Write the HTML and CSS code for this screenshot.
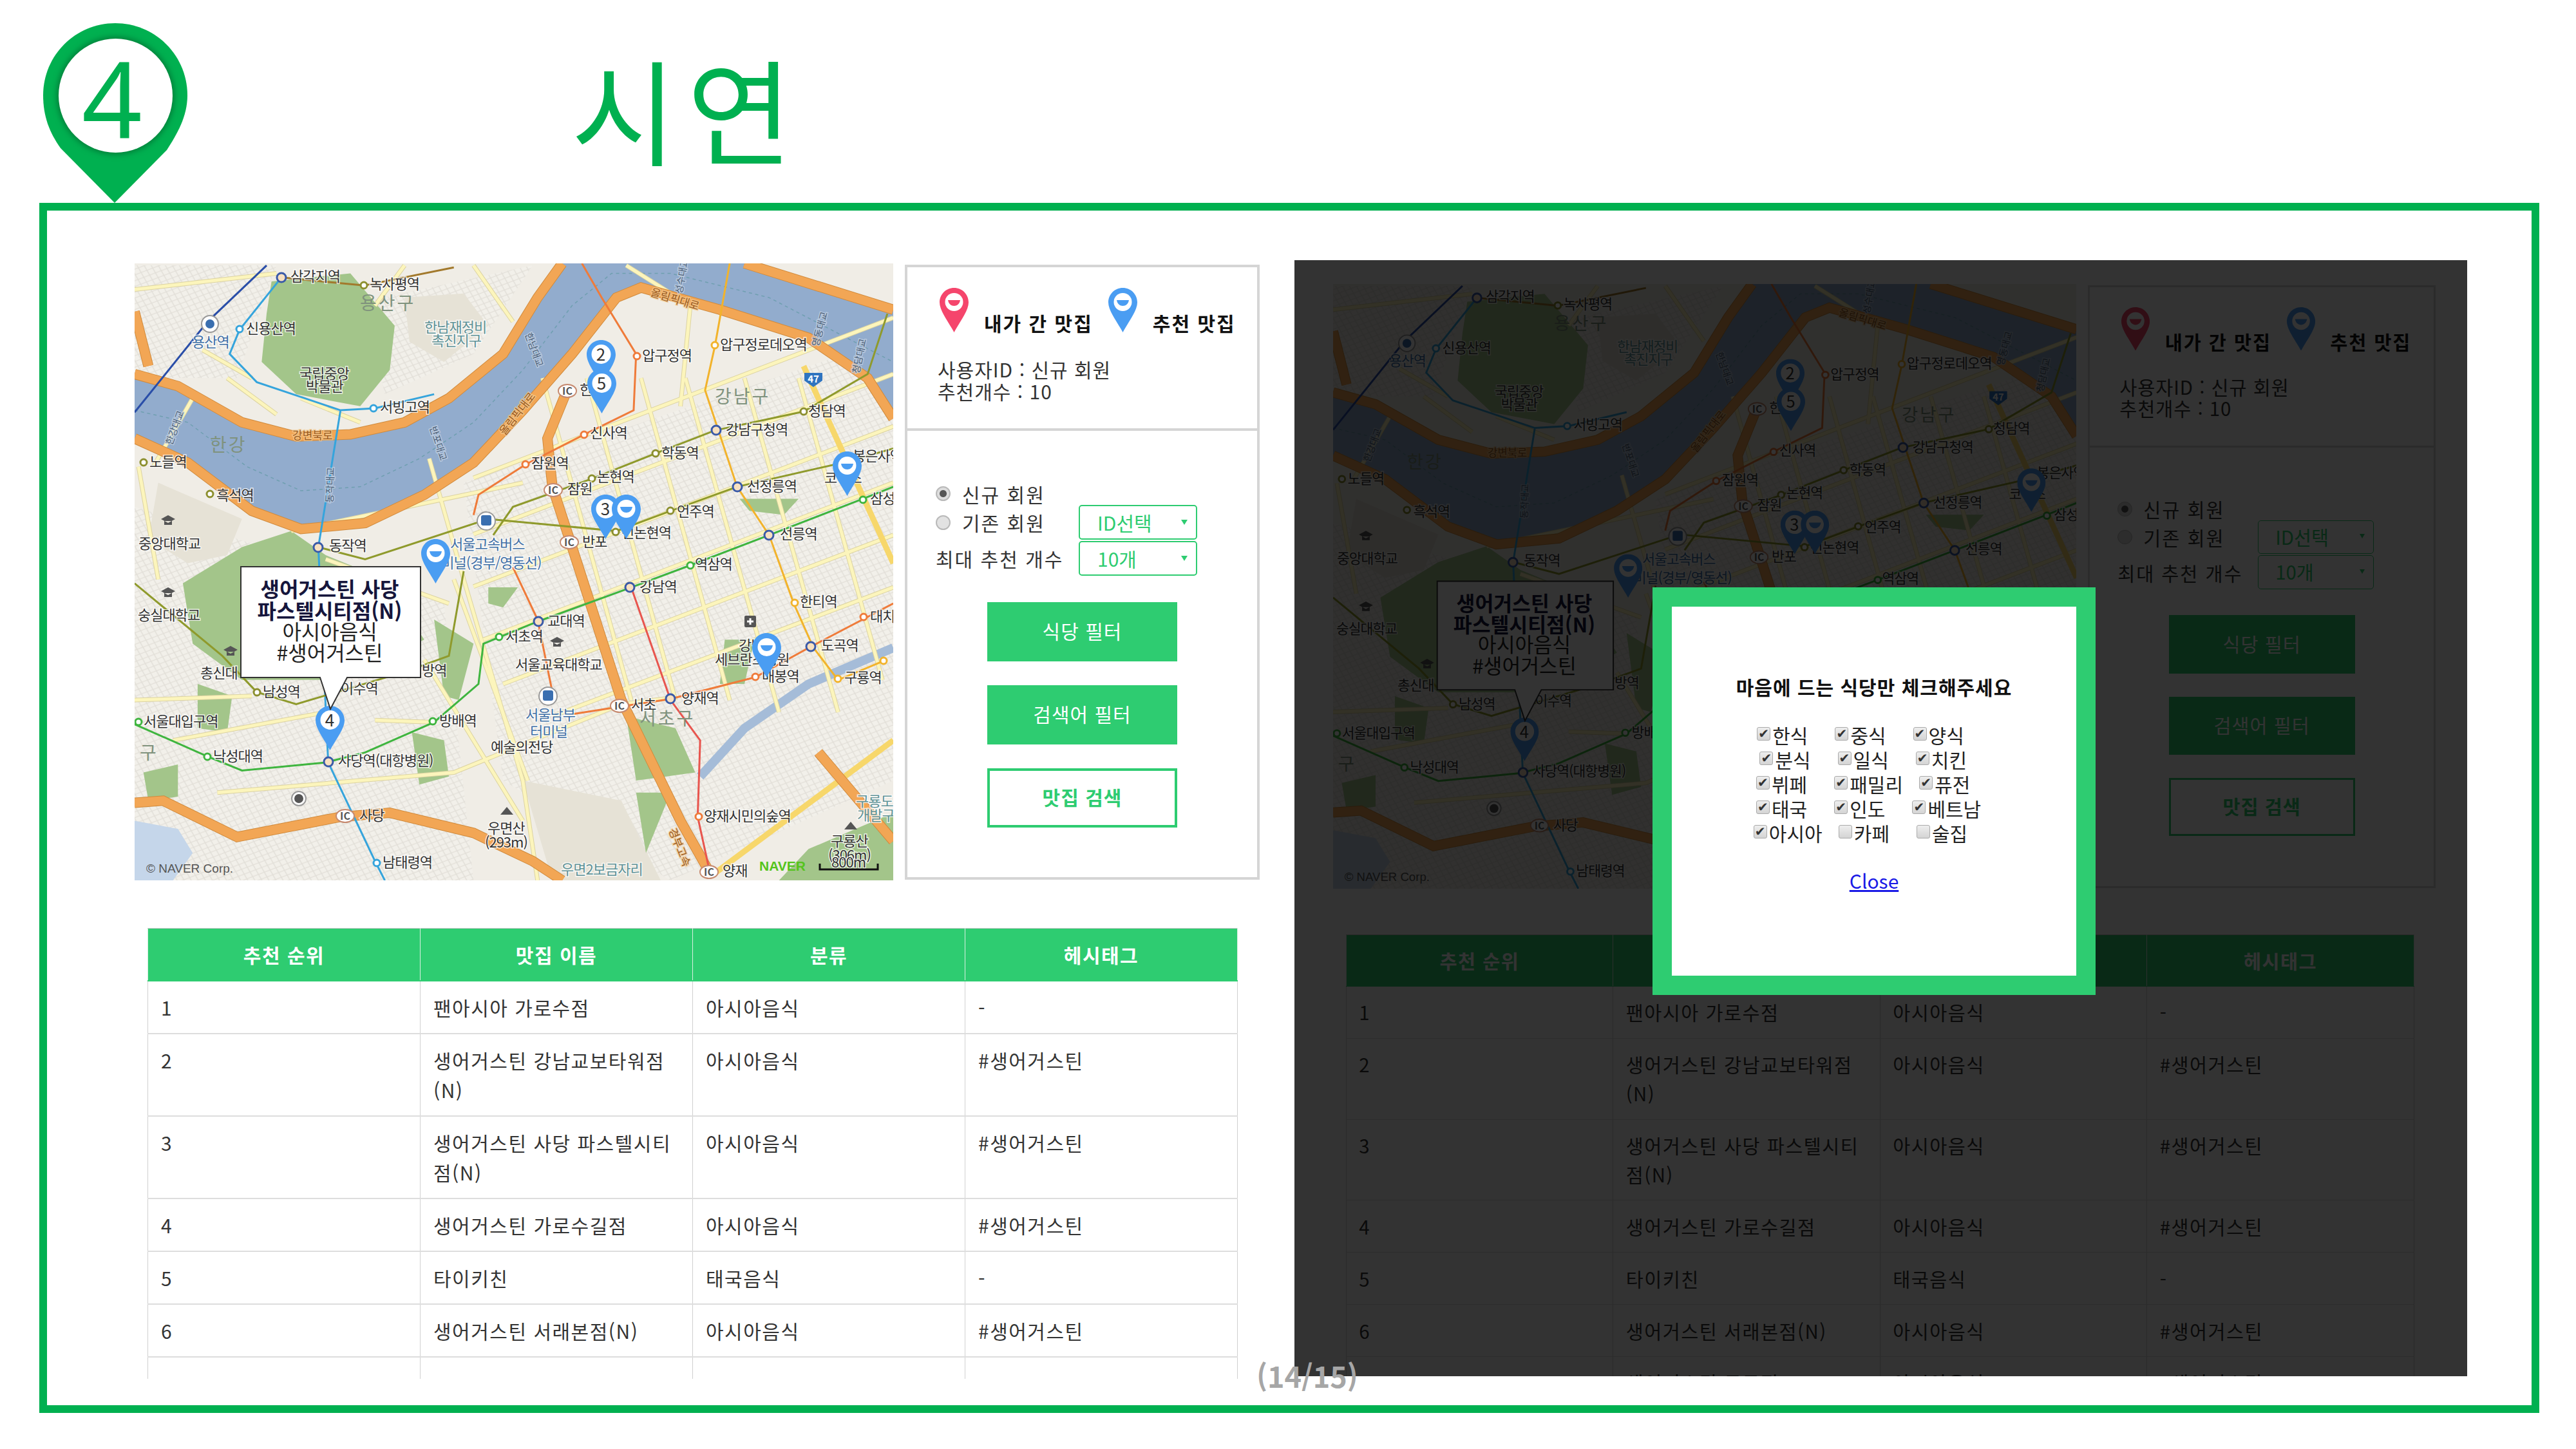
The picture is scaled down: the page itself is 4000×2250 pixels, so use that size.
FILE: index.html
```html
<!DOCTYPE html>
<html lang="ko">
<head>
<meta charset="utf-8">
<title>시연</title>
<link rel="stylesheet" href="styles.css">
</head>
<body>
<svg class="defs" aria-hidden="true">
  <defs>
    <symbol id="pin-v" viewBox="0 0 45 69">
      <path d="M22.5 0C35 0 45 10 45 22.5C45 36 31 53 22.5 69C14 53 0 36 0 22.5C0 10 10 0 22.5 0Z" fill="currentColor"/>
      <circle cx="22.5" cy="22" r="14" fill="#fff"/>
      <path d="M13 19H32C31 25 27 28 22.5 28C18 28 14 25 13 19Z" fill="currentColor"/>
    </symbol>
    <symbol id="pin-n" viewBox="0 0 45 69">
      <path d="M22.5 0C35 0 45 10 45 22.5C45 36 31 53 22.5 69C14 53 0 36 0 22.5C0 10 10 0 22.5 0Z" fill="currentColor"/>
      <circle cx="22.5" cy="22" r="15" fill="#fff"/>
    </symbol>
    <pattern id="streets" width="26" height="26" patternUnits="userSpaceOnUse" patternTransform="rotate(-25)">
      <rect width="26" height="26" fill="#f2f0ea"/>
      <path d="M0 6H26M0 19H26M7 0V26M20 0V26" stroke="#e2dfd8" stroke-width="2" fill="none"/>
    </pattern>
    <g id="expressways" class="nss">
      <path d="M12 290L100 320L230 410L340 445L450 440L560 410L650 350L760 240L830 100L880 15"/>
      <path d="M1250 15L1552 130"/>
      <path d="M12 450L120 510L250 630L350 675L480 660L600 590L700 510L800 380L900 240L990 100L1040 75L1200 130L1380 200L1500 300L1552 400"/>
      <path d="M890 330L850 450L860 570L900 720L1000 1100L1120 1400L1180 1530"/>
      <path d="M12 1355L70 1350L220 1440L430 1390L530 1380L700 1430L820 1500L880 1548"/>
      <path d="M1400 1230L1552 1450"/>
      <path d="M12 135L40 270"/>
    </g>
    <g id="roads" class="nss">
      <path d="M700 548L1552 150M700 688L1552 290M700 818L1552 420M720 950L1552 560M760 1060L1552 690M860 1140L1552 820"/>
      <path d="M840 300L1020 1100M930 300L1110 1100M1040 300L1220 1100M1130 300L1320 1130M1250 300L1440 1130M1360 300L1530 1050"/>
      <path d="M610 500L680 800L800 1300L830 1548M20 520L60 800M130 350L50 520M500 1150L620 1155M12 1100L250 1090M200 300L300 390"/>
      <path d="M180 1330L660 1280L1000 1110L1100 1095M12 80L300 40M700 20L780 160M1140 120L1120 370M330 680L800 560M400 750L650 860M600 1000L800 1400"/>
      <path d="M350 350L470 410M560 20L500 120M150 230L250 300M1010 20L1140 120M90 1200L400 1130M660 800L810 1300"/>
    </g>
  </defs>
</svg>

<header class="slide-head">
  <svg class="step-pin" viewBox="0 0 224 279">
    <path class="step-pin-body" d="M112 0C174 0 224 50 224 112C224 145 208 172 192 197L111 279L27 194C10 170 0 145 0 112C0 50 50 0 112 0Z"/>
    <circle class="step-pin-shade" cx="112.500" cy="112.500" r="91"/>
    <circle class="step-pin-hole" cx="112.500" cy="112.500" r="88.500"/>
    <text class="step-pin-num" x="107" y="179" text-anchor="middle">4</text>
  </svg>
  <h1 class="slide-title">시연</h1>
</header>

<main class="frame">
  <section class="shot">
    <div class="shot-top">
      <svg class="map" viewBox="0 0 1178 958">
        <g id="seoul-map">
          <rect class="m-land" width="1178" height="958"/>
          <g transform="translate(-9.2 -9.4) scale(.765 .625)">
            <path class="m-block" d="M680 560L1552 200V1300L1100 1548L760 1300Z"/>
            <path class="m-block" d="M12 620L640 860L700 1548H12Z"/>
            <path class="m-block" d="M12 20H300L220 300L12 300Z"/>
            <path class="m-block" d="M480 110L820 20L700 240L520 340Z"/>
            <path class="m-hill" d="M60 560L230 650L200 740L120 760L40 700Z"/>
            <path class="m-hill" d="M560 100L680 90L730 170L640 260L570 210Z"/>
            <path class="m-hill" d="M800 1300L1000 1350L1080 1548H860Z"/>
            <path class="m-park" d="M290 60L450 40L540 170L530 280L470 370L340 340L270 260L280 140Z"/>
            <path class="m-park" d="M110 810L230 720L330 680L400 740L520 800L600 950L420 1050L230 1050L130 960Z"/>
            <path class="m-park" d="M620 900L700 960L670 1100L640 1090ZM575 1180L640 1200L650 1290L590 1310ZM1010 1140L1110 1170L1150 1280L1030 1300ZM1240 600L1360 600L1330 640L1260 630ZM1210 950L1270 950L1250 1060L1200 1060ZM730 820L790 820L760 870L730 860ZM140 1060L210 1090L200 1180L140 1170ZM30 1280L100 1260L100 1340L40 1350ZM1030 1330L1100 1330L1050 1480ZM1380 1470L1552 1380V1548H1320Z"/>
            <path class="m-river" d="M12 290L100 320L230 410L340 445L450 440L560 410L650 350L760 240L830 100L880 15H1250L1552 130V400L1500 300L1380 200L1200 130L1040 75L990 100L900 240L800 380L700 510L600 590L480 660L350 675L250 630L120 510L12 450Z"/>
            <path class="m-river-dash nss-self" d="M12 380L120 410L240 520L350 580L470 570L590 500L700 410L800 280L900 120L980 40L1100 40L1300 100L1552 260"/>
            <path class="m-stream nss-self" d="M1160 1290L1250 1170L1380 1060L1552 970"/>
            <path class="m-lake" d="M12 1400L100 1420L130 1480L90 1548H12Z"/>
            <g class="m-casing-y"><use href="#roads"/></g>
            <g class="m-fill-y"><use href="#roads"/></g>
            <path class="m-bright nss-self" d="M1370 270L1552 760M1190 1530L1552 1200"/>
            <g class="m-casing-o"><use href="#expressways"/></g>
            <g class="m-fill-o"><use href="#expressways"/></g>
            <g class="m-lines">
              <path class="ln-green" d="M12 1160L160 1240L230 1275L400 1255L480 1230L620 1155L710 1060L720 960L830 905L1020 820L1140 765L1300 690L1490 600L1552 570"/>
              <path class="ln-orange" d="M700 640L710 590L805 515L925 440L1025 380L1030 240L960 100L920 15"/>
              <path class="ln-orange" d="M780 770L830 900L860 1080M900 1135L1100 1097L1272 1043L1385 967L1552 860"/>
              <path class="ln-gold" d="M1220 15L1190 220L1170 330L1235 570L1300 690L1350 860L1390 970L1440 1050L1532 1003"/>
              <path class="ln-red" d="M1020 820L1100 1100L1160 1200L1155 1390L1180 1530"/>
              <path class="ln-blue" d="M430 380L385 720L405 1255L500 1500L520 1548M310 50L225 180L205 240L260 310L430 380L500 375L620 340M225 180"/>
              <path class="ln-navy" d="M12 385L160 160L280 20"/>
              <path class="ln-olive" d="M385 720L480 750L730 650L990 680L1100 630L1235 570L1450 510L1552 475"/>
              <path class="ln-olive" d="M740 690L780 620L940 550L1070 487L1190 430L1370 383L1500 290L1540 140"/>
              <path class="ln-olive" d="M12 810L190 990L260 1080L340 1110L560 1030L650 990L680 780"/>
              <path class="ln-brown" d="M310 50L478 70L660 25"/>
            </g>
          </g>

          <g class="st st-multi"><circle cx="228" cy="22" r="7"/><circle cx="285" cy="441" r="7"/><circle cx="301" cy="774" r="7"/><circle cx="627" cy="556" r="7"/><circle cx="769" cy="503" r="7"/><circle cx="985" cy="422" r="7"/><circle cx="936" cy="347" r="7"/><circle cx="903" cy="259" r="7"/><circle cx="1050" cy="595" r="7"/><circle cx="832" cy="676" r="7"/></g>
          <g class="st st-olive"><circle cx="14" cy="309" r="5"/><circle cx="117" cy="358" r="5"/><circle cx="190" cy="666" r="5"/><circle cx="710" cy="334" r="5"/><circle cx="809" cy="295" r="5"/><circle cx="1039" cy="230" r="5"/><circle cx="832" cy="384" r="5"/><circle cx="747" cy="417" r="5"/><circle cx="356" cy="34" r="5"/></g>
          <g class="st st-green"><circle cx="6" cy="712" r="5"/><circle cx="113" cy="766" r="5"/><circle cx="463" cy="711" r="5"/><circle cx="566" cy="580" r="5"/><circle cx="863" cy="469" r="5"/><circle cx="1131" cy="367" r="5"/></g>
          <g class="st st-orange"><circle cx="607" cy="312" r="5"/><circle cx="698" cy="266" r="5"/><circle cx="780" cy="144" r="5"/><circle cx="964" cy="642" r="5"/><circle cx="876" cy="859" r="5"/><circle cx="1132" cy="549" r="5"/></g>
          <g class="st st-gold"><circle cx="901" cy="127" r="5"/><circle cx="1025" cy="527" r="5"/><circle cx="1092" cy="645" r="5"/><circle cx="1163" cy="617" r="5"/></g>
          <g class="st st-cyan"><circle cx="163" cy="102" r="5"/><circle cx="371" cy="225" r="5"/><circle cx="376" cy="931" r="5"/></g>

          <g class="m-icons">
            <g transform="translate(52 397)"><path class="ic-dark" d="M-11 0L0-6L11 0L0 6ZM-6 3V9H6V3Z"/></g>
            <g transform="translate(52 509)"><path class="ic-dark" d="M-11 0L0-6L11 0L0 6ZM-6 3V9H6V3Z"/></g>
            <g transform="translate(149 600)"><path class="ic-dark" d="M-11 0L0-6L11 0L0 6ZM-6 3V9H6V3Z"/></g>
            <g transform="translate(656 586)"><path class="ic-dark" d="M-11 0L0-6L11 0L0 6ZM-6 3V9H6V3Z"/></g>
            <path class="ic-dark" d="M578 844L588 856H568Z"/>
            <path class="ic-dark" d="M1112 867L1122 879H1102Z"/>
            <g transform="translate(546 400)"><circle class="ic-ring" r="14"/><rect class="ic-blue" x="-8" y="-9" width="16" height="16" rx="3"/></g>
            <g transform="translate(642 672)"><circle class="ic-ring" r="14"/><rect class="ic-blue" x="-8" y="-9" width="16" height="16" rx="3"/></g>
            <g transform="translate(117 94)"><circle class="ic-ring" r="13"/><circle class="ic-blue" r="7"/></g>
            <g transform="translate(255 831)"><circle class="ic-ring" r="11"/><circle class="ic-dark" r="7"/></g>
            <g transform="translate(956 556)"><rect class="ic-dark" x="-9" y="-9" width="18" height="18" rx="2"/><path class="ic-cross" d="M-5-1.500H5V1.500H-5ZM-1.500-5H1.500V5H-1.500Z"/></g>
          </g>

          <g class="mt">
            <text x="242" y="28">삼각지역</text><text x="365" y="40">녹사평역</text>
            <text x="173" y="109">신용산역</text>
            <text x="256" y="179">국립중앙</text><text x="266" y="199">박물관</text>
            <text x="381" y="231">서빙고역</text><text x="23" y="316">노들역</text><text x="127" y="368">흑석역</text>
            <text x="6" y="443">중앙대학교</text><text x="302" y="446">동작역</text><text x="5" y="554">숭실대학교</text>
            <text x="102" y="644">총신대</text><text x="199" y="673">남성역</text><text x="320" y="668">이수역</text><text x="446" y="640">방역</text>
            <text x="14" y="719">서울대입구역</text><text x="122" y="773">낙성대역</text><text x="316" y="780">사당역(대항병원)</text>
            <text x="473" y="718">방배역</text><text x="576" y="587">서초역</text><text x="641" y="563">교대역</text><text x="591" y="631">서울교육대학교</text>
            <text x="553" y="759">예술의전당</text><text x="548" y="885">우면산</text><text x="544" y="907">(293m)</text>
            <text x="349" y="865">사당</text><text x="385" y="938">남태령역</text><text x="913" y="951">양재</text>
            <text x="1081" y="905">구룡산</text><text x="1077" y="927">(306m)</text><text x="1082" y="938">800m</text>
            <text x="884" y="866">양재시민의숲역</text><text x="849" y="683">양재역</text><text x="771" y="693">서초</text>
            <text x="974" y="649">매봉역</text><text x="1102" y="651">구룡역</text><text x="1066" y="601">도곡역</text><text x="1142" y="556">대치</text>
            <text x="901" y="623">세브란스병원</text><text x="938" y="601">강남</text><text x="1033" y="533">한티역</text><text x="870" y="475">역삼역</text>
            <text x="784" y="510">강남역</text><text x="1002" y="428">선릉역</text><text x="951" y="354">선정릉역</text><text x="842" y="393">언주역</text>
            <text x="756" y="426">신논현역</text><text x="695" y="440">반포</text><text x="672" y="358">잠원</text><text x="718" y="339">논현역</text>
            <text x="616" y="318">잠원역</text><text x="707" y="271">신사역</text><text x="818" y="302">학동역</text><text x="918" y="266">강남구청역</text>
            <text x="1046" y="237">청담역</text><text x="788" y="151">압구정역</text><text x="909" y="134">압구정로데오역</text><text x="691" y="204">한</text>
            <text x="1115" y="307">봉은사역</text><text x="1142" y="373">삼성역</text><text x="1071" y="341">코엑스</text>
          </g>
          <g class="mt mt-blue">
            <text x="89" y="130">용산역</text><text x="607" y="709">서울남부</text><text x="614" y="735">터미널</text>
            <text x="490" y="444">서울고속버스</text><text x="457" y="473">터미널(경부/영동선)</text>
          </g>
          <g class="mt mt-teal">
            <text x="450" y="107">한남재정비</text><text x="461" y="128">촉진지구</text><text x="662" y="949">우면2보금자리</text><text x="1120" y="843">구룡도</text><text x="1122" y="865">개발구</text>
          </g>
          <g class="mt mt-large">
            <text x="350" y="72">용산구</text><text x="901" y="217">강남구</text><text x="784" y="717">서초구</text><text x="117" y="292">한강</text><text x="8" y="770">구</text>
          </g>
          <g class="mt mt-road">
            <text x="245" y="273">강변북로</text>
            <text transform="translate(800 50) rotate(17)">올림픽대로</text>
            <text transform="translate(575 268) rotate(-52)">올림픽대로</text>
            <text transform="translate(829 880) rotate(68)">경부고속</text>
          </g>
          <g class="mt mt-bridge">
            <text transform="translate(58 283) rotate(-70)">한강대교</text>
            <text transform="translate(308 372) rotate(-88)">동작대교</text>
            <text transform="translate(458 255) rotate(72)">반포대교</text>
            <text transform="translate(606 110) rotate(70)">한남대교</text>
            <text transform="translate(850 48) rotate(-80)">성수대교</text>
            <text transform="translate(1062 130) rotate(-75)">영동대교</text>
            <text transform="translate(1125 172) rotate(-78)">청담대교</text>
          </g>
          <g class="m-ic">
            <g><ellipse cx="672" cy="198" rx="14" ry="10"/><text x="672" y="204">IC</text></g>
            <g><ellipse cx="650" cy="352" rx="14" ry="10"/><text x="650" y="358">IC</text></g>
            <g><ellipse cx="675" cy="433" rx="14" ry="10"/><text x="675" y="439">IC</text></g>
            <g><ellipse cx="753" cy="687" rx="14" ry="10"/><text x="753" y="693">IC</text></g>
            <g><ellipse cx="327" cy="858" rx="14" ry="10"/><text x="327" y="864">IC</text></g>
            <g><ellipse cx="892" cy="945" rx="14" ry="10"/><text x="892" y="951">IC</text></g>
          </g>
          <g class="m-badge"><path d="M1040 170h28v12l-14 10l-14-10z"/><text x="1054" y="185">47</text></g>
          <text class="m-naver" x="970" y="943">NAVER</text>
          <text class="m-copy" x="18" y="946">© NAVER Corp.</text>
          <path class="m-scale" d="M1064 932V941H1154V932"/>

          <use class="pin-blue" href="#pin-n" x="702" y="119" width="45" height="69"/>
          <use class="pin-blue" href="#pin-n" x="703" y="164" width="45" height="69"/>
          <use class="pin-blue" href="#pin-n" x="709" y="359" width="45" height="69"/>
          <use class="pin-blue" href="#pin-v" x="741" y="359" width="45" height="69"/>
          <use class="pin-blue" href="#pin-n" x="281" y="687" width="45" height="69"/>
          <use class="pin-blue" href="#pin-v" x="445" y="428" width="45" height="69"/>
          <use class="pin-blue" href="#pin-v" x="1084" y="292" width="45" height="69"/>
          <use class="pin-blue" href="#pin-v" x="959" y="574" width="45" height="69"/>
          <g class="pin-num">
            <text x="724" y="151">2</text><text x="725" y="196">5</text><text x="731" y="391">3</text><text x="303" y="719">4</text>
          </g>

          <path class="m-bubble" d="M165 471H444V643H330L304 692L288 643H165Z"/>
          <g class="m-bubble-text">
            <text class="bold" x="303" y="518">생어거스틴 사당</text>
            <text class="bold" x="303" y="552">파스텔시티점(N)</text>
            <text x="303" y="584">아시아음식</text>
            <text x="303" y="617">#생어거스틴</text>
          </g>
        </g>
      </svg>
      <aside class="side">
        <div class="side-info">
          <div class="legend">
            <div class="legend-item">
              <svg class="legend-pin pin-red"><use href="#pin-v" width="45" height="69"/></svg>
              <strong>내가 간 맛집</strong>
            </div>
            <div class="legend-item">
              <svg class="legend-pin pin-blue"><use href="#pin-v" width="45" height="69"/></svg>
              <strong>추천 맛집</strong>
            </div>
          </div>
          <p class="summary">사용자ID : 신규 회원<br>추천개수 : 10</p>
        </div>
        <div class="side-form">
          <div class="form-grid">
            <label class="radio-line"><input class="radio" type="radio" name="m1" checked>신규 회원</label>
            <span></span>
            <label class="radio-line"><input class="radio" type="radio" name="m1">기존 회원</label>
            <div class="pick">ID선택</div>
            <span class="form-label">최대 추천 개수</span>
            <div class="pick">10개</div>
          </div>
          <button class="btn" type="button">식당 필터</button>
          <button class="btn" type="button">검색어 필터</button>
          <button class="btn btn-line" type="button">맛집 검색</button>
        </div>
      </aside>
    </div>
    <table class="rank">
      <thead><tr><th>추천 순위</th><th>맛집 이름</th><th>분류</th><th>헤시태그</th></tr></thead>
      <tbody>
        <tr><td>1</td><td>팬아시아 가로수점</td><td>아시아음식</td><td>-</td></tr>
        <tr><td>2</td><td>생어거스틴 강남교보타워점<br>(N)</td><td>아시아음식</td><td>#생어거스틴</td></tr>
        <tr><td>3</td><td>생어거스틴 사당 파스텔시티<br>점(N)</td><td>아시아음식</td><td>#생어거스틴</td></tr>
        <tr><td>4</td><td>생어거스틴 가로수길점</td><td>아시아음식</td><td>#생어거스틴</td></tr>
        <tr><td>5</td><td>타이키친</td><td>태국음식</td><td>-</td></tr>
        <tr><td>6</td><td>생어거스틴 서래본점(N)</td><td>아시아음식</td><td>#생어거스틴</td></tr>
        <tr><td>&nbsp;</td><td></td><td></td><td></td></tr>
      </tbody>
    </table>
  </section>

  <section class="dimmed">
    <div class="shot shot-copy">
      <div class="shot-top">
        <svg class="map" viewBox="0 0 1178 958"><use href="#seoul-map"/></svg>
        <aside class="side">
          <div class="side-info">
            <div class="legend">
              <div class="legend-item">
                <svg class="legend-pin pin-red"><use href="#pin-v" width="45" height="69"/></svg>
                <strong>내가 간 맛집</strong>
              </div>
              <div class="legend-item">
                <svg class="legend-pin pin-blue"><use href="#pin-v" width="45" height="69"/></svg>
                <strong>추천 맛집</strong>
              </div>
            </div>
            <p class="summary">사용자ID : 신규 회원<br>추천개수 : 10</p>
          </div>
          <div class="side-form">
            <div class="form-grid">
              <label class="radio-line"><input class="radio" type="radio" name="m2" checked>신규 회원</label>
              <span></span>
              <label class="radio-line"><input class="radio" type="radio" name="m2">기존 회원</label>
              <div class="pick">ID선택</div>
              <span class="form-label">최대 추천 개수</span>
              <div class="pick">10개</div>
            </div>
            <button class="btn" type="button">식당 필터</button>
            <button class="btn" type="button">검색어 필터</button>
            <button class="btn btn-line" type="button">맛집 검색</button>
          </div>
        </aside>
      </div>
      <table class="rank">
        <thead><tr><th>추천 순위</th><th>맛집 이름</th><th>분류</th><th>헤시태그</th></tr></thead>
        <tbody>
          <tr><td>1</td><td>팬아시아 가로수점</td><td>아시아음식</td><td>-</td></tr>
          <tr><td>2</td><td>생어거스틴 강남교보타워점<br>(N)</td><td>아시아음식</td><td>#생어거스틴</td></tr>
          <tr><td>3</td><td>생어거스틴 사당 파스텔시티<br>점(N)</td><td>아시아음식</td><td>#생어거스틴</td></tr>
          <tr><td>4</td><td>생어거스틴 가로수길점</td><td>아시아음식</td><td>#생어거스틴</td></tr>
          <tr><td>5</td><td>타이키친</td><td>태국음식</td><td>-</td></tr>
          <tr><td>6</td><td>생어거스틴 서래본점(N)</td><td>아시아음식</td><td>#생어거스틴</td></tr>
          <tr><td>7</td><td>생어거스틴 도곡점</td><td>아시아음식</td><td>#생어거스틴</td></tr>
        </tbody>
      </table>
    </div>
    <div class="scrim"></div>
    <div class="modal">
      <h2 class="modal-title">마음에 드는 식당만 체크해주세요</h2>
      <div class="check-row"><label><input class="chk" type="checkbox" checked>한식</label>&nbsp;&nbsp;&nbsp;&nbsp;&nbsp;<label><input class="chk" type="checkbox" checked>중식</label>&nbsp;&nbsp;&nbsp;&nbsp;&nbsp;<label><input class="chk" type="checkbox" checked>양식</label>&nbsp;&nbsp;&nbsp;&nbsp;&nbsp;</div>
      <div class="check-row"><label><input class="chk" type="checkbox" checked>분식</label>&nbsp;&nbsp;&nbsp;&nbsp;&nbsp;<label><input class="chk" type="checkbox" checked>일식</label>&nbsp;&nbsp;&nbsp;&nbsp;&nbsp;<label><input class="chk" type="checkbox" checked>치킨</label>&nbsp;&nbsp;&nbsp;&nbsp;</div>
      <div class="check-row"><label><input class="chk" type="checkbox" checked>뷔페</label>&nbsp;&nbsp;&nbsp;&nbsp;&nbsp;<label><input class="chk" type="checkbox" checked>패밀리</label>&nbsp;&nbsp;&nbsp;<label><input class="chk" type="checkbox" checked>퓨전</label>&nbsp;&nbsp;&nbsp;&nbsp;</div>
      <div class="check-row"><label><input class="chk" type="checkbox" checked>태국</label>&nbsp;&nbsp;&nbsp;&nbsp;&nbsp;<label><input class="chk" type="checkbox" checked>인도</label>&nbsp;&nbsp;&nbsp;&nbsp;&nbsp;<label><input class="chk" type="checkbox" checked>베트남</label>&nbsp;&nbsp;</div>
      <div class="check-row"><label><input class="chk" type="checkbox" checked>아시아</label>&nbsp;&nbsp;&nbsp;<label><input class="chk" type="checkbox">카페</label>&nbsp;&nbsp;&nbsp;&nbsp;&nbsp;<label><input class="chk" type="checkbox">술집</label>&nbsp;&nbsp;&nbsp;&nbsp;&nbsp;</div>
      <a class="modal-close" href="#">Close</a>
    </div>
  </section>
  <div class="page-no">(14/15)</div>
</main>
</body>
</html>
```
FILE: styles.css
```css
* { box-sizing: border-box; }
html, body { margin: 0; padding: 0; background: #fff; }
body {
  width: 4000px;
  height: 2250px;
  overflow: hidden;
  font-family: "Noto Sans CJK KR", "Noto Sans", sans-serif;
  font-size: 30px;
  color: #333;
}
.defs { position: absolute; width: 0; height: 0; }

/* header */
.slide-head {
  height: 315px;
  padding: 36px 0 0 67px;
  display: flex;
  align-items: flex-start;
}
.step-pin { width: 224px; height: 279px; flex: none; }
.step-pin-body { fill: #00b050; }
.step-pin-shade { fill: #007a38; filter: blur(5px); }
.step-pin-hole { fill: #fff; }
.step-pin-num { fill: #00b050; font-family: "Noto Sans", sans-serif; font-weight: 400; font-size: 164px; }
.slide-title {
  margin: 31px 0 0 596px;
  font-size: 178px;
  line-height: 200px;
  font-weight: 400;
  letter-spacing: 16px;
  color: #00b050;
}

/* frame */
.frame {
  position: relative;
  width: 3882px;
  height: 1879px;
  margin-left: 61px;
  border: 12px solid #00b050;
  padding: 82px 0 0 136px;
  display: flex;
  align-items: flex-start;
  gap: 54px;
}
.shot { width: 1747px; height: 1732px; overflow: hidden; flex: none; }
.shot-top { display: flex; align-items: flex-start; gap: 18px; height: 958px; }
.map { width: 1178px; height: 958px; flex: none; display: block; }

/* side panel */
.side { width: 551px; height: 955px; margin-top: 2px; border: 4px solid #d5d5d5; flex: none; }
.side-info { height: 254px; border-bottom: 4px solid #d5d5d5; padding: 32px 0 0 50px; }
.legend { display: flex; gap: 24px; align-items: flex-end; }
.legend-item { display: flex; gap: 24px; align-items: flex-end; }
.legend-item strong { font-size: 30px; line-height: 30px; color: #111; white-space: nowrap; letter-spacing: 2px; }
.legend-pin { width: 45px; height: 69px; }
.pin-red { color: #f5456c; }
.pin-blue { color: #4a9df2; }
.summary { margin: 40px 0 0 -3px; font-size: 30px; line-height: 34px; color: #333; letter-spacing: 1px; }
.side-form { display: flex; flex-direction: column; align-items: center; padding-top: 82px; }
.form-grid {
  align-self: flex-start;
  margin-left: 44px;
  display: grid;
  grid-template-columns: 222px 184px;
  grid-template-rows: 31px 54px 54px;
  row-gap: 2px;
  align-items: center;
  letter-spacing: 2px;
}
.radio-line { display: flex; align-items: center; gap: 18px; height: 30px; white-space: nowrap; }
.radio {
  appearance: none;
  width: 23px;
  height: 23px;
  margin: 0;
  border-radius: 50%;
  background: #e2e2e2;
  border: 2px solid #b9b9b9;
}
.radio:checked { background: radial-gradient(circle, #555 0 5px, #ddd 6px); }
.form-label { white-space: nowrap; }
.pick {
  position: relative;
  height: 54px;
  line-height: 50px;
  padding-left: 27px;
  border: 2px solid #2ecc71;
  border-radius: 5px;
  color: #2ecc71;
  letter-spacing: 0;
}
.pick::after {
  content: "";
  position: absolute;
  right: 13px;
  top: 21px;
  border-left: 5px solid transparent;
  border-right: 5px solid transparent;
  border-top: 8px solid #2ecc71;
}
.btn {
  width: 295px;
  height: 92px;
  margin-top: 37px;
  border: 0;
  background: #2ecc71;
  color: #fff;
  font: inherit;
  letter-spacing: 1px;
  padding: 0 0 4px;
}
.form-grid + .btn { margin-top: 41px; }
.btn-line { background: #fff; border: 4px solid #2ecc71; color: #2ecc71; font-weight: 700; }

/* table */
.rank {
  width: 1693px;
  margin: 74px 0 0 20px;
  border-collapse: collapse;
  table-layout: fixed;
  line-height: 46px;
  font-size: 30px;
  letter-spacing: 1.500px;
}
.rank th, .rank td { padding: 17px 20px; border-left: 1px solid #d0d0d0; border-right: 1px solid #d0d0d0; white-space: nowrap; }
.rank th { background: #2ecc71; color: #fff; font-weight: 700; text-align: center; border-bottom: 2px solid #2ecc71; border-top: 1px solid #c8c8c8; border-left-color: #d8f0e0; border-right-color: #d8f0e0; }
.rank td { border-bottom: 2px solid #ddd; vertical-align: top; color: #333; }

/* dimmed copy */
.dimmed {
  position: relative;
  width: 1821px;
  height: 1733px;
  margin-top: -5px;
  padding: 37px 0 0 60px;
  overflow: hidden;
  background: #fff;
  flex: none;
}
.shot-copy { zoom: .98; height: 1790px; }
.shot-copy .rank { margin-top: 73px; }
.shot-copy .rank td { padding-top: 17.750px; padding-bottom: 17.750px; }
.scrim { position: absolute; inset: 0; background: rgba(0, 0, 0, .8); }
.modal {
  position: absolute;
  left: 556px;
  top: 508px;
  width: 688px;
  height: 633px;
  border: 30px solid #2ecc71;
  background: #fff;
  padding-top: 99px;
  text-align: center;
  color: #222;
}
.modal-title { margin: 0 0 31px; font-size: 30px; line-height: 50px; font-weight: 700; color: #111; letter-spacing: 1px; }
.check-row { height: 38px; line-height: 38px; white-space: nowrap; }
.check-row label { display: inline-block; }
.chk {
  appearance: none;
  position: relative;
  width: 21px;
  height: 21px;
  margin: 0 3px 0 0;
  vertical-align: 4px;
  border-radius: 3px;
  border: 1px solid #aaa;
  background: linear-gradient(#eee, #d4d4d4);
}
.chk:checked::before {
  content: "✔";
  position: absolute;
  left: 1px;
  top: -10px;
  font: 20px/38px "DejaVu Sans", sans-serif;
  color: #333;
}
.modal-close { display: inline-block; margin-top: 36px; line-height: 38px; color: #1a1ae6; text-decoration: underline; }
.page-no {
  position: absolute;
  left: 1878px;
  top: 1786px;
  font-size: 45px;
  line-height: 46px;
  font-weight: 700;
  color: #a6a6a6;
}

/* map drawing */
.m-land { fill: #f0ede6; }
.m-block { fill: url(#streets); }
.m-hill { fill: #e6e2d6; }
.m-park { fill: #a3c58a; }
.m-river { fill: #92accd; }
.m-river-dash { fill: none; stroke: #6f9fb0; stroke-width: 1.500px; stroke-dasharray: 5 5; }
.m-lake { fill: #c5d6ea; }
.m-stream { fill: none; stroke: #a5bcd8; stroke-width: 14px; }
.nss path, .nss-self, .m-lines path { vector-effect: non-scaling-stroke; }
.m-casing-y { fill: none; stroke: #dcd3a2; stroke-width: 7px; }
.m-fill-y { fill: none; stroke: #fcf5bc; stroke-width: 5px; }
.m-bright { fill: none; stroke: #f7d76b; stroke-width: 9px; }
.m-casing-o { fill: none; stroke: #d08a3c; stroke-width: 16px; }
.m-fill-o { fill: none; stroke: #f2a655; stroke-width: 14px; }
.m-lines path { fill: none; stroke-width: 3px; }
.ln-green { stroke: #3fb53f; }
.ln-orange { stroke: #ef7b3a; }
.ln-gold { stroke: #f2b32c; }
.ln-red { stroke: #e8554e; }
.ln-blue { stroke: #35a4dc; }
.ln-navy { stroke: #2a4ea8; }
.ln-olive { stroke: #8f9a2c; }
.ln-brown { stroke: #a2792c; }
.st circle { fill: #fff; stroke-width: 3px; }
.st-multi circle { stroke: #3a5aa8; fill: #f8e0c0; }
.st-olive circle { stroke: #8c8f2e; }
.st-green circle { stroke: #3fb53f; }
.st-orange circle { stroke: #ef7b3a; }
.st-gold circle { stroke: #f2b32c; }
.st-cyan circle { stroke: #35a4dc; }
.ic-dark { fill: #555; }
.ic-ring { fill: #fff; stroke: #999; stroke-width: 2px; }
.ic-blue { fill: #3a6fb0; }
.ic-cross { fill: #fff; }
.mt text {
  font-size: 22px;
  fill: #333;
  stroke: #fff;
  stroke-width: 3px;
  stroke-opacity: .75;
  paint-order: stroke;
  letter-spacing: -1px;
}
.mt-blue text { fill: #3f6fa6; }
.mt-teal text { fill: #5f9296; }
.mt-large text { font-size: 28px; fill: #7f927d; letter-spacing: 3px; stroke: none; }
.mt-road text { font-size: 17px; fill: #9a5a20; stroke: #f3c98f; letter-spacing: 0; }
.mt-bridge text { font-size: 15px; fill: #4c5f78; stroke: #c5d3e4; letter-spacing: 0; }
.m-ic ellipse { fill: #fff; stroke: #c68a70; stroke-width: 2px; }
.m-ic text { font-size: 16px; font-weight: 700; fill: #555; text-anchor: middle; }
.m-badge path { fill: #2f74c0; }
.m-badge text { font-size: 15px; font-weight: 700; fill: #fff; text-anchor: middle; }
.m-naver { font-family: "Liberation Sans", sans-serif; font-size: 21px; font-weight: 700; fill: #55c41c; }
.m-copy { font-family: "Liberation Sans", sans-serif; font-size: 19px; fill: #555; }
.m-scale { fill: none; stroke: #111; stroke-width: 3px; }
.pin-num text { font-size: 26px; fill: #333; text-anchor: middle; }
.m-bubble { fill: #fff; stroke: #333; stroke-width: 2px; }
.m-bubble-text text { font-size: 32px; fill: #222; text-anchor: middle; }
.m-bubble-text .bold { font-weight: 700; fill: #16163c; }
```
